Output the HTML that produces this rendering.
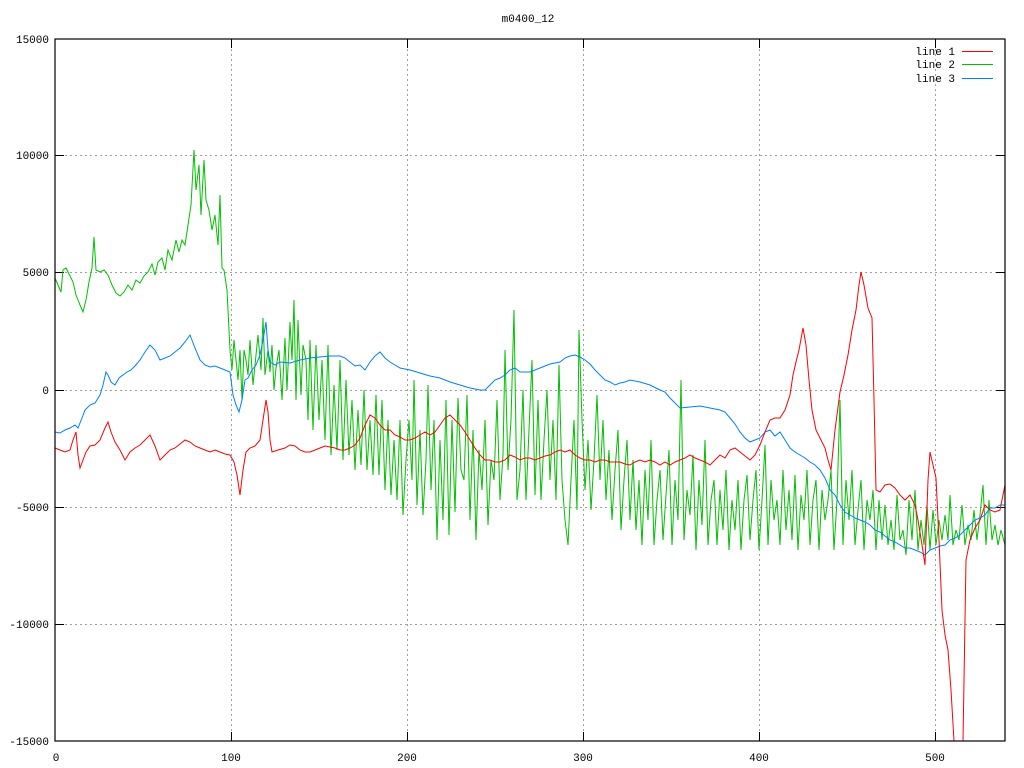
<!DOCTYPE html>
<html><head><meta charset="utf-8"><style>
html,body{margin:0;padding:0;background:#fff;}
svg{display:block;}
text{font-family:"Liberation Mono","DejaVu Sans Mono",monospace;font-size:11px;fill:#000;}
</style></head><body>
<svg width="1024" height="768" viewBox="0 0 1024 768" xmlns="http://www.w3.org/2000/svg">
<rect width="1024" height="768" fill="#fff"/>
<g stroke="#a0a0a0" stroke-width="1" stroke-dasharray="2,3" fill="none">
<path d="M231.5 39V741M407.5 39V741M583.5 39V741M759.5 39V741M935.5 39V741"/>
<path d="M55 155.5H1005M55 272.5H1005M55 390.5H1005M55 507.5H1005M55 624.5H1005"/>
</g>
<g stroke="#000" stroke-width="1">
<path d="M231.5 741v-9M407.5 741v-9M583.5 741v-9M759.5 741v-9M935.5 741v-9M231.5 39v9M407.5 39v9M583.5 39v9M759.5 39v9M935.5 39v9"/>
<path d="M55 155.5h9M55 272.5h9M55 390.5h9M55 507.5h9M55 624.5h9M1005 155.5h-9M1005 272.5h-9M1005 390.5h-9M1005 507.5h-9M1005 624.5h-9"/>
</g>
<g text-anchor="end">
<text x="49" y="43">15000</text><text x="49" y="159">10000</text><text x="49" y="276">5000</text>
<text x="49" y="394">0</text><text x="49" y="511">-5000</text><text x="49" y="628">-10000</text><text x="49" y="745">-15000</text>
</g>
<g text-anchor="middle">
<text x="56" y="761">0</text><text x="231" y="761">100</text><text x="407" y="761">200</text>
<text x="583" y="761">300</text><text x="759" y="761">400</text><text x="935" y="761">500</text>
<text x="528" y="22">m0400_12</text>
</g>
<g fill="none" stroke-width="1" stroke-linejoin="miter">
<polyline stroke="#00c000" points="55,278 58,285 61,292 63,270 66,268 70,276 73,282 76,295 80,305 83,312 86,300 89,282 92,268 94,237 96,270 100,272 104,270 108,275 112,285 116,293 120,296 124,292 128,285 132,290 136,280 140,283 144,276 148,272 152,264 155,275 158,262 162,258 165,270 168,250 172,260 176,240 179,252 182,240 185,245 188,225 191,205 194,150 196,190 199,165 201,215 204,160 206,200 209,210 212,230 215,215 218,245 220,195 222,268 224,270 227,290 230,350 232,370 234,340 236,360 238,380 240,350 242,400 244,350 246,360 248,375 250,340 253,385 256,355 258,335 261,370 263,318 265,375 268,350 270,372 272,345 274,390 276,368 279,350 282,400 285,338 287,390 290,322 292,360 294,300 296,400 298,320 301,395 303,345 306,360 308,420 310,340 313,430 316,345 319,420 322,360 325,440 328,345 331,455 334,385 337,450 340,360 343,460 346,380 349,455 352,400 355,470 358,410 361,465 364,390 367,470 370,420 373,475 376,395 379,475 382,400 385,490 388,420 391,495 394,440 397,500 400,420 403,515 406,460 409,420 412,480 414,380 417,505 420,430 423,515 426,460 428,385 431,490 434,420 437,540 440,440 443,520 446,400 449,535 452,420 455,512 458,398 461,470 464,480 467,395 470,520 473,430 476,540 479,450 482,490 485,420 488,525 491,460 494,480 497,400 500,500 503,455 505,350 508,470 511,420 514,310 517,500 520,470 523,390 526,500 529,430 532,360 535,495 538,400 541,500 544,440 547,390 550,480 553,420 556,500 559,365 562,480 565,520 568,545 571,480 574,420 577,510 579,330 582,420 585,490 588,440 591,510 594,460 597,395 600,480 603,420 606,500 609,450 612,520 615,470 618,430 621,530 624,480 627,440 630,520 633,460 636,530 639,480 642,545 645,470 648,520 651,440 654,545 657,500 660,470 663,540 666,495 669,450 672,545 675,480 678,520 681,380 684,540 687,490 690,515 693,455 696,550 699,480 702,525 705,440 708,545 711,500 714,480 717,545 720,490 723,530 726,470 729,550 732,500 735,530 738,480 741,550 744,500 747,475 750,540 753,500 756,470 759,550 762,500 765,445 768,545 771,480 774,520 777,500 780,545 783,470 786,530 789,490 792,540 795,475 798,550 801,495 804,520 807,470 810,545 813,500 816,480 819,550 822,490 825,520 828,500 831,470 834,550 837,500 840,400 843,545 846,480 849,520 852,470 855,545 858,510 861,480 864,550 867,500 870,520 873,490 876,550 879,500 882,540 885,505 888,545 891,520 894,550 897,495 900,540 903,530 906,555 909,500 912,540 915,490 918,550 921,520 924,545 927,505 930,550 933,510 936,545 939,520 942,540 945,515 948,540 950,495 953,545 956,530 959,540 962,505 965,545 968,525 971,540 974,510 977,540 980,515 983,485 986,545 989,500 992,540 995,525 998,545 1001,530 1005,545"/>
<polyline stroke="#0080ff" points="55,432 60,433 65,430 70,428 75,425 78,428 82,418 85,410 90,405 95,403 100,395 103,385 106,372 108,375 111,382 115,385 119,378 123,375 127,372 131,370 135,366 140,360 145,352 150,345 155,350 160,360 165,358 170,356 175,352 180,348 185,342 190,335 195,348 200,360 205,365 210,367 215,366 220,368 225,370 230,372 233,395 236,405 239,412 242,400 245,380 248,378 252,370 256,365 260,355 263,340 266,322 268,350 270,362 275,365 280,362 290,363 300,360 310,358 320,357 330,356 340,356 345,358 350,362 355,366 360,365 365,370 370,362 375,356 380,352 385,358 390,362 395,365 400,368 410,370 420,373 430,376 440,378 450,382 460,385 470,388 480,390 485,390 490,385 495,380 500,378 505,375 510,370 515,368 520,372 530,372 540,368 550,364 560,362 565,358 570,356 575,355 580,357 585,360 590,364 595,370 600,375 605,380 610,382 615,385 620,383 625,382 630,380 640,382 650,385 660,390 665,392 670,398 675,403 680,408 690,407 700,406 710,408 720,410 725,412 730,418 735,424 740,432 745,438 750,442 755,440 760,438 765,432 770,430 775,436 780,432 785,440 790,448 795,452 800,455 805,458 810,462 815,465 820,470 825,478 830,490 835,495 840,505 845,512 850,515 855,518 860,520 865,522 870,525 875,530 880,532 885,536 890,540 895,542 900,545 905,548 910,548 915,550 920,552 925,555 930,550 935,548 940,546 945,545 950,540 955,538 960,535 965,530 970,525 975,520 980,518 985,515 990,508 995,508 1000,505 1005,505"/>
<polyline stroke="#ff0000" points="55,448 60,450 65,452 70,450 73,440 76,432 78,455 80,468 83,460 86,452 90,446 95,445 100,440 105,428 108,422 111,432 115,442 120,450 125,460 130,452 135,448 140,445 145,440 150,435 155,446 160,460 165,455 170,450 175,448 180,444 185,440 190,442 195,446 200,448 205,450 210,452 215,450 220,452 225,454 230,455 234,462 237,475 240,495 243,470 246,452 250,448 255,446 260,440 263,420 266,400 268,412 270,440 272,452 278,450 285,448 290,445 295,446 300,450 305,452 310,452 315,450 320,448 325,446 330,447 335,448 340,450 345,450 350,448 355,445 360,438 365,425 370,415 375,418 380,425 385,430 390,430 395,435 400,437 405,440 410,440 415,438 420,435 425,432 430,435 435,432 440,425 445,418 450,415 455,420 460,425 465,432 470,440 475,448 480,455 485,460 490,460 495,462 500,462 505,460 510,455 515,457 520,460 525,458 530,458 535,460 540,458 545,456 550,455 555,452 560,450 565,452 570,450 575,455 580,458 585,460 590,460 595,462 600,460 605,460 610,462 615,462 620,462 625,464 630,465 635,462 640,460 645,462 650,460 655,462 660,465 665,462 670,465 675,462 680,460 685,458 690,455 695,458 700,460 705,462 710,465 715,460 720,455 725,458 730,450 735,448 740,452 745,456 750,460 755,455 760,445 765,432 770,420 775,418 780,418 785,410 790,395 793,375 796,362 799,350 803,328 806,345 809,380 812,410 816,430 820,438 825,448 828,460 831,470 835,430 840,392 844,375 848,355 852,330 856,310 859,285 861,272 864,285 868,308 872,318 874,400 876,490 880,492 885,485 890,484 895,488 900,495 905,500 910,495 915,505 918,520 922,545 925,565 928,480 930,452 933,465 936,478 939,540 942,610 945,635 948,650 951,690 954,741 M960,741"/>
<polyline stroke="#ff0000" points="963,741 965,620 966,560 970,540 975,528 980,520 985,505 990,510 995,512 1000,510 1003,495 1005,485"/>
</g>
<rect x="55" y="39" width="950" height="702" fill="none" stroke="#000" stroke-width="1.2"/>
<g text-anchor="end"><text x="955" y="55">line 1</text><text x="955" y="68">line 2</text><text x="955" y="82">line 3</text></g>
<path d="M962 51.5h31" stroke="#ff0000"/><path d="M962 64.5h31" stroke="#00c000"/><path d="M962 78.5h31" stroke="#0080ff"/>
</svg>
</body></html>
